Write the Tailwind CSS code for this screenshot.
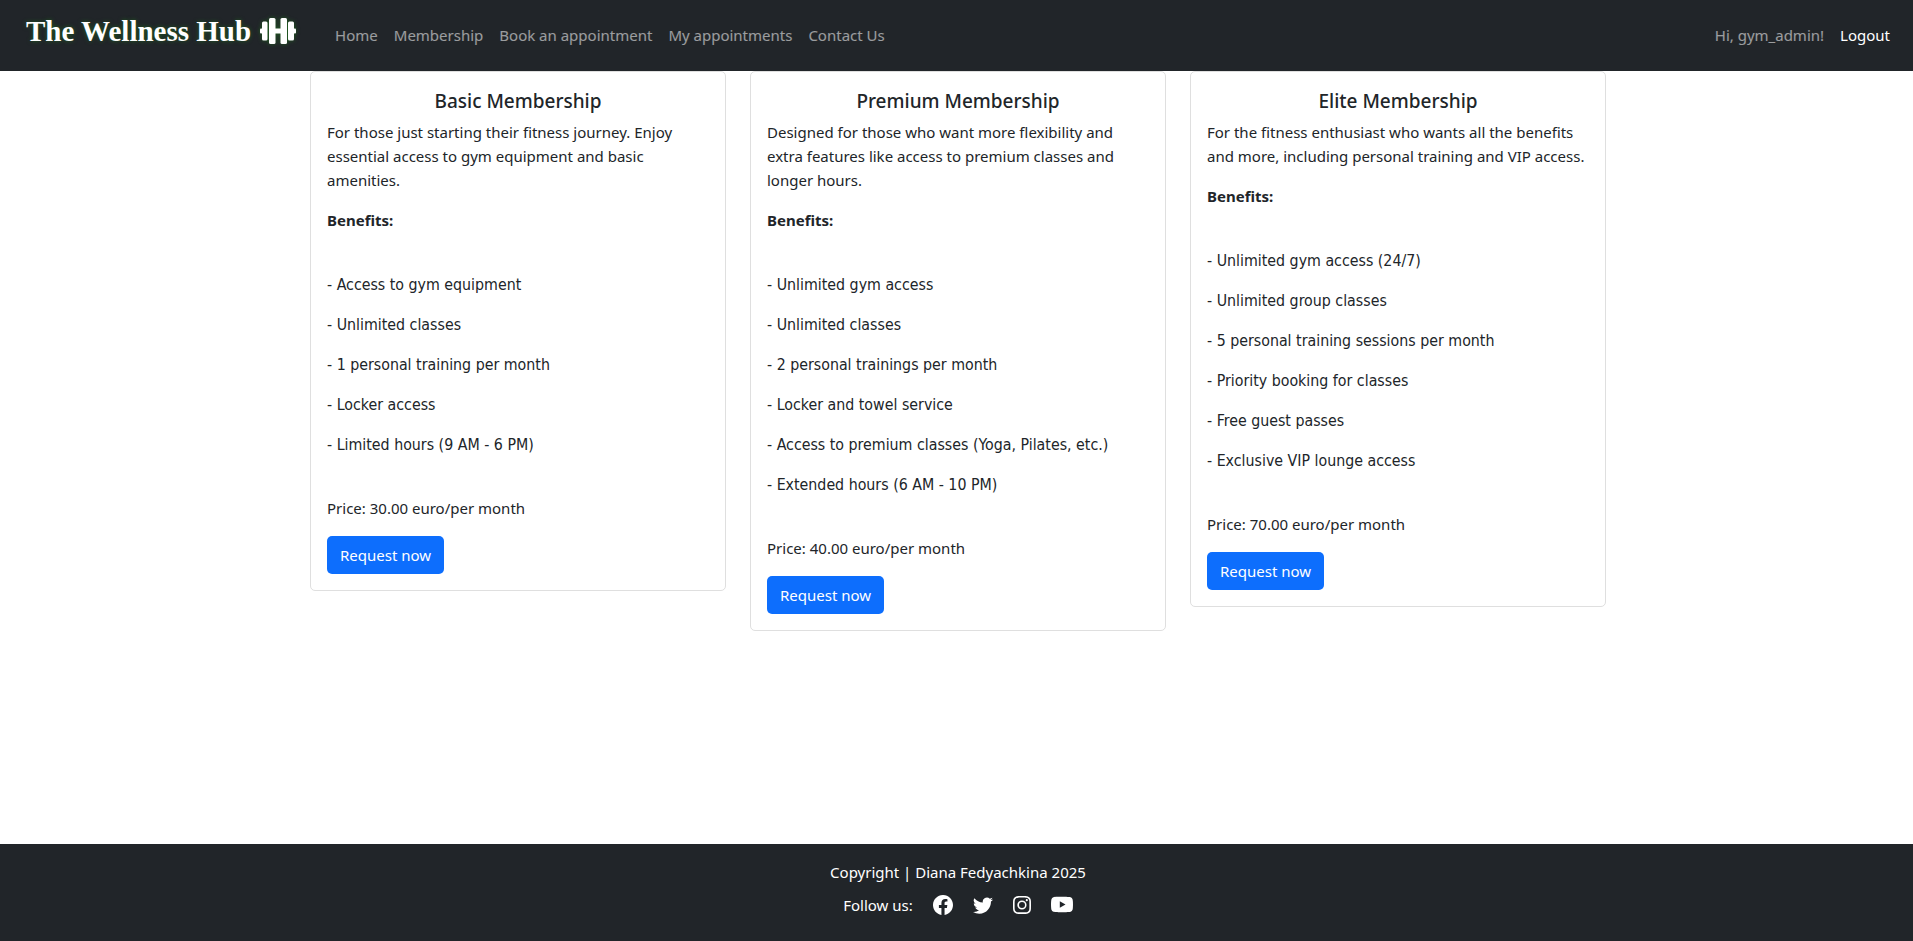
<!DOCTYPE html>
<html lang="en">
<head>
  <meta charset="UTF-8" />
  <title>Membership - The Wellness Hub</title>
  <script src="https://cdn.jsdelivr.net/npm/@tailwindcss/browser@4"></script>
</head>
<body class="bg-white min-h-[941px] flex flex-col font-['Noto_Sans',sans-serif] text-[15px] leading-6 text-[#212529]">

  <!-- Navbar -->
  <nav class="h-[71px] bg-[#212529] flex items-center pl-[26px] pr-[23px] shrink-0">
    <a href="#" class="flex items-center gap-[9px] -mt-[10px] font-['Liberation_Serif',serif] font-bold text-[29px] leading-8 text-white [text-shadow:0_0_4px_#1f5f1f]">
      The Wellness Hub
      <svg class="w-[36px] h-[28px]" viewBox="0 0 36 28" fill="#fff" style="filter:drop-shadow(0 0 2px #1f5f1f)">
        <rect x="0" y="11.5" width="2.5" height="5" rx="1"/>
        <rect x="2" y="4.5" width="5.5" height="19" rx="1.5"/>
        <rect x="9" y="1" width="6.5" height="26" rx="1.5"/>
        <rect x="15" y="11.5" width="6" height="5"/>
        <rect x="20.5" y="1" width="6.5" height="26" rx="1.5"/>
        <rect x="28" y="4.5" width="6" height="19" rx="1.5"/>
        <rect x="33.5" y="11.5" width="2.5" height="5" rx="1"/>
      </svg>
    </a>
    <ul class="flex gap-[16px] ml-[39px] -mt-[1px] text-white/55">
      <li><a href="#">Home</a></li>
      <li><a href="#">Membership</a></li>
      <li><a href="#">Book an appointment</a></li>
      <li><a href="#">My appointments</a></li>
      <li><a href="#">Contact Us</a></li>
    </ul>
    <div class="ml-auto flex gap-[16px] -mt-[1px]">
      <span class="text-white/55">Hi, gym_admin!</span>
      <a href="#" class="text-white">Logout</a>
    </div>
  </nav>

  <!-- Membership cards -->
  <main class="flex-1 flex items-start gap-6 pl-[310px]">

    <div class="w-[416px] border border-[#dfdfdf] rounded-[5px] p-4">
      <h5 class="text-[19px] leading-6 font-medium text-center pt-px mb-[7px]">Basic Membership</h5>
      <p class="mb-4">For those just starting their fitness journey. Enjoy essential access to gym equipment and basic amenities.</p>
      <p class="mb-4 font-bold">Benefits:</p>
      <div class="pt-[25px] pb-[23px] font-['DejaVu_Sans_Condensed','DejaVu_Sans',sans-serif] text-[15.8px]">
        <p class="mb-4">- Access to gym equipment</p>
        <p class="mb-4">- Unlimited classes</p>
        <p class="mb-4">- 1 personal training per month</p>
        <p class="mb-4">- Locker access</p>
        <p class="mb-4">- Limited hours (9 AM - 6 PM)</p>
      </div>
      <p class="mb-4">Price: 30.00 euro/per month</p>
      <a href="#" class="inline-block h-[38px] w-[117px] text-center leading-[38px] bg-[#0d6efd] text-white rounded-[5px]">Request now</a>
    </div>

    <div class="w-[416px] border border-[#dfdfdf] rounded-[5px] p-4">
      <h5 class="text-[19px] leading-6 font-medium text-center pt-px mb-[7px]">Premium Membership</h5>
      <p class="mb-4">Designed for those who want more flexibility and extra features like access to premium classes and longer hours.</p>
      <p class="mb-4 font-bold">Benefits:</p>
      <div class="pt-[25px] pb-[23px] font-['DejaVu_Sans_Condensed','DejaVu_Sans',sans-serif] text-[15.8px]">
        <p class="mb-4">- Unlimited gym access</p>
        <p class="mb-4">- Unlimited classes</p>
        <p class="mb-4">- 2 personal trainings per month</p>
        <p class="mb-4">- Locker and towel service</p>
        <p class="mb-4">- Access to premium classes (Yoga, Pilates, etc.)</p>
        <p class="mb-4">- Extended hours (6 AM - 10 PM)</p>
      </div>
      <p class="mb-4">Price: 40.00 euro/per month</p>
      <a href="#" class="inline-block h-[38px] w-[117px] text-center leading-[38px] bg-[#0d6efd] text-white rounded-[5px]">Request now</a>
    </div>

    <div class="w-[416px] border border-[#dfdfdf] rounded-[5px] p-4">
      <h5 class="text-[19px] leading-6 font-medium text-center pt-px mb-[7px]">Elite Membership</h5>
      <p class="mb-4">For the fitness enthusiast who wants all the benefits and more, including personal training and VIP access.</p>
      <p class="mb-4 font-bold">Benefits:</p>
      <div class="pt-[25px] pb-[23px] font-['DejaVu_Sans_Condensed','DejaVu_Sans',sans-serif] text-[15.8px]">
        <p class="mb-4">- Unlimited gym access (24/7)</p>
        <p class="mb-4">- Unlimited group classes</p>
        <p class="mb-4">- 5 personal training sessions per month</p>
        <p class="mb-4">- Priority booking for classes</p>
        <p class="mb-4">- Free guest passes</p>
        <p class="mb-4">- Exclusive VIP lounge access</p>
      </div>
      <p class="mb-4">Price: 70.00 euro/per month</p>
      <a href="#" class="inline-block h-[38px] w-[117px] text-center leading-[38px] bg-[#0d6efd] text-white rounded-[5px]">Request now</a>
    </div>
  </main>

  <!-- Footer -->
  <footer class="h-[97px] bg-[#212529] text-white flex flex-col items-center pt-4 pl-[3px] shrink-0">
    <p class="mb-[9px]">Copyright | Diana Fedyachkina 2025</p>
    <div class="flex items-center">
      <span class="mr-[20px]">Follow us:</span>
      <a href="#" class="w-[40px]">
        <svg class="w-5 h-5" viewBox="0 0 16 16" fill="#fff"><path d="M16 8.049c0-4.446-3.582-8.05-8-8.05C3.58 0-.002 3.603-.002 8.05c0 4.017 2.926 7.347 6.75 7.951v-5.625h-2.03V8.05H6.75V6.275c0-2.017 1.195-3.131 3.022-3.131.876 0 1.791.157 1.791.157v1.98h-1.009c-.993 0-1.303.621-1.303 1.258v1.51h2.218l-.354 2.326H9.25V16c3.824-.604 6.75-3.934 6.75-7.951"/></svg>
      </a>
      <a href="#" class="w-[40px]">
        <svg class="w-5 h-5" viewBox="0 0 16 16" fill="#fff"><path d="M5.026 15c6.038 0 9.341-5.003 9.341-9.334q.002-.211-.006-.422A6.7 6.7 0 0 0 16 3.542a6.7 6.7 0 0 1-1.889.518 3.3 3.3 0 0 0 1.447-1.817 6.5 6.5 0 0 1-2.087.793A3.286 3.286 0 0 0 7.875 6.03a9.32 9.32 0 0 1-6.767-3.429 3.28 3.28 0 0 0 1.018 4.382A3.3 3.3 0 0 1 .64 6.575v.045a3.29 3.29 0 0 0 2.632 3.218 3.2 3.2 0 0 1-.865.115 3 3 0 0 1-.614-.057 3.28 3.28 0 0 0 3.067 2.277A6.6 6.6 0 0 1 .78 13.58a6 6 0 0 1-.78-.045A9.34 9.34 0 0 0 5.026 15"/></svg>
      </a>
      <a href="#" class="w-[38px]">
        <svg class="w-[18px] h-[18px]" viewBox="0 0 16 16" fill="#fff"><path d="M8 0C5.829 0 5.556.01 4.703.048 3.85.088 3.269.222 2.76.42a3.9 3.9 0 0 0-1.417.923A3.9 3.9 0 0 0 .42 2.76C.222 3.268.087 3.85.048 4.7.01 5.555 0 5.827 0 8.001c0 2.172.01 2.444.048 3.297.04.852.174 1.433.372 1.942.205.526.478.972.923 1.417.444.445.89.719 1.416.923.51.198 1.09.333 1.942.372C5.555 15.99 5.827 16 8 16s2.444-.01 3.298-.048c.851-.04 1.434-.174 1.943-.372a3.9 3.9 0 0 0 1.416-.923c.445-.445.718-.891.923-1.417.197-.509.332-1.09.372-1.942C15.99 10.445 16 10.173 16 8s-.01-2.445-.048-3.299c-.04-.851-.175-1.433-.372-1.941a3.9 3.9 0 0 0-.923-1.417A3.9 3.9 0 0 0 13.24.42c-.51-.198-1.092-.333-1.943-.372C10.443.01 10.172 0 7.998 0zm-.717 1.442h.718c2.136 0 2.389.007 3.232.046.78.035 1.204.166 1.486.275.373.145.64.319.92.599s.453.546.598.92c.11.281.24.705.275 1.485.039.843.047 1.096.047 3.231s-.008 2.389-.047 3.232c-.035.78-.166 1.203-.275 1.485a2.5 2.5 0 0 1-.599.919c-.28.28-.546.453-.92.598-.28.11-.704.24-1.485.276-.843.038-1.096.047-3.232.047s-2.39-.009-3.233-.047c-.78-.036-1.203-.166-1.485-.276a2.5 2.5 0 0 1-.92-.598 2.5 2.5 0 0 1-.6-.92c-.109-.281-.24-.705-.275-1.485-.038-.843-.046-1.096-.046-3.233s.008-2.388.046-3.231c.036-.78.166-1.204.276-1.486.145-.373.319-.64.599-.92s.546-.453.92-.598c.282-.11.705-.24 1.485-.276.738-.034 1.024-.044 2.515-.045zm4.988 1.328a.96.96 0 1 0 0 1.92.96.96 0 0 0 0-1.92m-4.27 1.122a4.109 4.109 0 1 0 0 8.217 4.109 4.109 0 0 0 0-8.217m0 1.441a2.667 2.667 0 1 1 0 5.334 2.667 2.667 0 0 1 0-5.334"/></svg>
      </a>
      <a href="#">
        <svg class="w-[22px] h-[22px]" viewBox="0 0 16 16" fill="#fff"><path d="M8.051 1.999h.089c.822.003 4.987.033 6.11.335a2.01 2.01 0 0 1 1.415 1.42c.101.38.172.883.22 1.402l.01.104.022.26.008.104c.065.914.073 1.77.074 1.957v.075c-.001.194-.01 1.108-.082 2.06l-.008.105-.009.104c-.05.572-.124 1.14-.235 1.558a2.01 2.01 0 0 1-1.415 1.42c-1.16.312-5.569.334-6.18.335h-.142c-.309 0-1.587-.006-2.927-.052l-.17-.006-.087-.004-.171-.007-.171-.007c-1.11-.049-2.167-.128-2.654-.26a2.01 2.01 0 0 1-1.415-1.419c-.111-.417-.185-.986-.235-1.558L.09 9.82l-.008-.104A31 31 0 0 1 0 7.68v-.123c.002-.215.01-.958.064-1.778l.007-.103.003-.052.008-.104.022-.26.01-.104c.048-.519.119-1.023.22-1.402a2.01 2.01 0 0 1 1.415-1.42c.487-.13 1.544-.21 2.654-.26l.17-.007.172-.006.086-.003.171-.007A100 100 0 0 1 7.858 2zM6.4 5.209v4.818l4.157-2.408z"/></svg>
      </a>
    </div>
  </footer>
</body>
</html>
